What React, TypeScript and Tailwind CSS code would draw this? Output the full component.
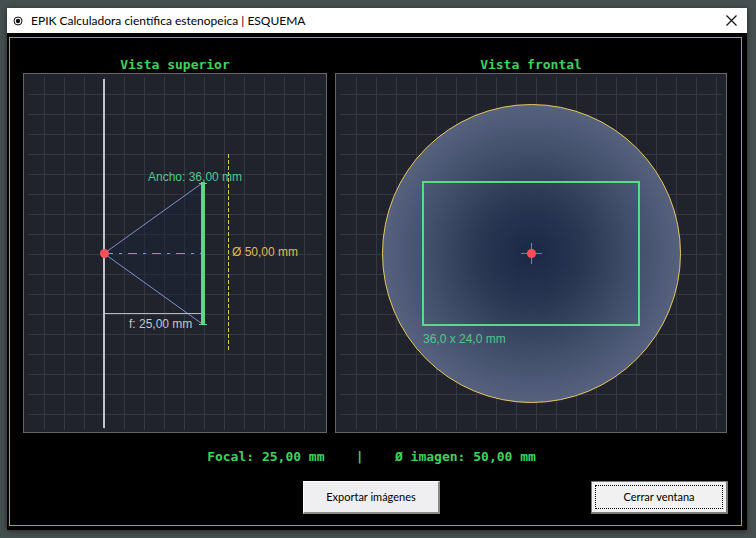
import type { ReactNode } from "react"

interface GridProps {
    width: number
    height: number
}

interface PanelProps {
    title: string
    className: string
    children: ReactNode
}

function Grid({ width, height }: GridProps) {
    const columns = Array.from({ length: Math.floor(width / 20) }, (_, i) => 20.5 + i * 20).filter((x) => x < width - 4)
    const rows = Array.from({ length: Math.floor(height / 20) }, (_, i) => 20.5 + i * 20).filter((y) => y < height - 4)

    return (
        <g stroke="#353944">
            {columns.map((x) => (
                <line key={x} x1={x} x2={x} y1="3" y2={height - 2} />
            ))}
            {rows.map((y) => (
                <line key={y} x1="4" x2={width - 4} y1={y} y2={y} />
            ))}
        </g>
    )
}

function Panel({ title, className, children }: PanelProps) {
    return (
        <section className={className}>
            <h2 className="text-center font-['DejaVu_Sans_Mono',monospace] text-[13px] leading-4 font-bold text-[#3fd35a]">{title}</h2>
            <div className="border border-[#64666a] bg-[#20222c]">{children}</div>
        </section>
    )
}

function TopView() {
    return (
        <svg viewBox="0 0 302 358" className="block w-full font-['Liberation_Sans',sans-serif] text-[12px]">
            <Grid width={302} height={358} />
            <path d="M80 179.5L179 108.5V250.5Z" fill="#1b2438" fillOpacity="0.5" />
            <path d="M80 5V354" stroke="#c3c3ca" strokeWidth="2" />
            <path d="M80 179.5H179" stroke="#6f98e0" strokeDasharray="9 6 3 6" />
            <path d="M179 108.5L80 179.5L179 250.5" stroke="#8090d0" fill="none" />
            <path d="M81 239.5H178" stroke="#b4b6c0" />
            <path d="M204.5 80V276" stroke="#dccb50" strokeDasharray="4 2" />
            <path d="M179 108V251" stroke="#5bd985" strokeWidth="4" />
            <path d="M175 109.5H183M175 250.5H183" stroke="#5bd985" />
            <circle cx="80.5" cy="179.5" r="4.5" fill="#ff5058" />
            <text x="124" y="107" fill="#4fc88a">Ancho: 36,00 mm</text>
            <text x="208" y="182" fill="#e2bb4a">Ø 50,00 mm</text>
            <text x="105" y="254" fill="#c4c6cf">f: 25,00 mm</text>
        </svg>
    )
}

function FrontView() {
    return (
        <svg viewBox="0 0 390 358" className="block w-full font-['Liberation_Sans',sans-serif] text-[12px]">
            <defs>
                <radialGradient id="falloff">
                    <stop offset="0" stopColor="#1a2745" />
                    <stop offset="0.35" stopColor="#293753" />
                    <stop offset="0.7" stopColor="#42506c" />
                    <stop offset="1" stopColor="#56617e" />
                </radialGradient>
            </defs>
            <Grid width={390} height={358} />
            <circle cx="195.5" cy="179.5" r="149" fill="url(#falloff)" stroke="#e6c75e" />
            <rect x="87" y="108" width="216" height="143" fill="none" stroke="#5bd985" strokeWidth="2" />
            <path d="M185 179.5H206M195.5 169V190" stroke="#ff5058" />
            <circle cx="195.5" cy="179.5" r="4.5" fill="#ff5058" />
            <text x="87" y="269" fill="#4fc88a">36,0 x 24,0 mm</text>
        </svg>
    )
}

export default function App() {
    return (
        <div className="min-h-screen bg-[#475050] py-2 pr-[9px] pl-[7px]">
            <div className="bg-black pb-1 shadow-[0_1px_6px_rgba(0,0,0,0.5)]">
                <header className="flex h-[25px] items-center bg-white pr-2 pl-[6px]">
                    <svg viewBox="0 0 10 10" className="mr-2 size-[10px]">
                        <circle cx="5" cy="5" r="4" fill="none" stroke="#111" />
                        <circle cx="5" cy="5" r="2.2" fill="#111" />
                    </svg>
                    <h1 className="flex-1 font-[Lato,sans-serif] text-[12px] text-black">EPIK Calculadora científica estenopeica | ESQUEMA</h1>
                    <button aria-label="Cerrar" className="p-0.5">
                        <svg viewBox="0 0 11 11" className="size-[11px]">
                            <path d="M0.5 0.5L10.5 10.5M10.5 0.5L0.5 10.5" stroke="#111" strokeWidth="1.2" />
                        </svg>
                    </button>
                </header>

                <main className="mt-1 mr-[5px] ml-[2px] border border-[#5cc070] pt-[19px] pb-[11px]">
                    <div className="flex gap-2 pr-[14px] pl-[13px]">
                        <Panel title="Vista superior" className="flex-[304_1_0%]">
                            <TopView />
                        </Panel>
                        <Panel title="Vista frontal" className="flex-[392_1_0%]">
                            <FrontView />
                        </Panel>
                    </div>

                    <footer className="pr-[13px] pl-[5px]">
                        <p className="mt-4 text-center font-['DejaVu_Sans_Mono',monospace] text-[13px] leading-4 font-bold whitespace-pre text-[#3fd35a]">{"Focal: 25,00 mm    |    Ø imagen: 50,00 mm"}</p>
                        <div className="mt-4 grid grid-cols-[1fr_auto_1fr] font-[Lato,sans-serif] text-[11px] text-black">
                            <button className="col-start-2 h-[33px] w-[137px] border-t border-r-2 border-b-2 border-l border-t-white border-r-[#8a8a8a] border-b-[#8a8a8a] border-l-white bg-[#efeff1]">Exportar imágenes</button>
                            <button className="h-[33px] w-[137px] justify-self-end border border-r-2 border-b-2 border-[#7c7c7c] bg-[#f1f1f1] p-[3px]">
                                <span className="flex h-full items-center justify-center border border-dotted border-black">Cerrar ventana</span>
                            </button>
                        </div>
                    </footer>
                </main>
            </div>
        </div>
    )
}
